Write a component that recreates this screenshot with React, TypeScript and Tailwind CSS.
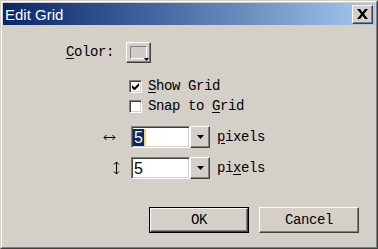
const mono = "font-['Liberation_Mono',monospace] text-[14px] tracking-[-0.4px] text-black";
const raised =
  "border border-t-white border-l-white border-r-[#404040] border-b-[#404040] shadow-[inset_-1px_-1px_0_#808080]";
const sunken =
  "border border-t-[#808080] border-l-[#808080] border-r-white border-b-white shadow-[inset_1px_1px_0_#404040,inset_-1px_-1px_0_#d4d0c8]";

function Check({ checked }: { checked?: boolean }) {
  return (
    <div className={`w-[13px] h-[13px] bg-white ${sunken} flex items-center justify-center`}>
      {checked && (
        <svg width="7" height="7" viewBox="0 0 7 7">
          <path d="M0 2v3l2 2h1l4-4V0L2.5 4.5z" fill="#000" />
        </svg>
      )}
    </div>
  );
}

function Combo({ selected }: { selected?: boolean }) {
  return (
    <div className="flex h-[22px]">
      <div className={`w-[59px] h-full bg-white ${sunken} flex items-center pl-[1px]`}>
        <span
          className={`font-['Liberation_Sans',sans-serif] text-[16px] leading-[17px] px-[1px] ${
            selected ? "bg-[#0a246a] text-white border-r-2 border-[#f5d66b]" : "text-black"
          }`}
        >
          5
        </span>
      </div>
      <div className={`w-[20px] h-full bg-[#d4d0c8] ${raised} flex items-center justify-center`}>
        <svg width="7" height="4" viewBox="0 0 7 4">
          <path d="M0 0h7L3.5 4z" fill="#000" />
        </svg>
      </div>
    </div>
  );
}

export default function App() {
  return (
    <div className="w-[378px] h-[249px] bg-[#d4d0c8] border border-t-[#d4d0c8] border-l-[#d4d0c8] border-r-[#404040] border-b-[#404040] overflow-hidden">
      <div className="h-full border border-t-white border-l-white border-r-[#808080] border-b-[#808080] p-[1px] flex flex-col">
        {/* title bar */}
        <div className="h-[22px] flex items-center justify-between pl-[2px] pr-[2px] bg-linear-to-r from-[#0a246a] to-[#a6caf0]">
          <span className="font-['Liberation_Sans',sans-serif] text-[15px] text-white leading-none">Edit Grid</span>
          <div className={`w-[21px] h-[19px] bg-[#d4d0c8] ${raised} flex items-center justify-center`}>
            <svg width="11" height="10" viewBox="0 0 11 10">
              <path d="M0 0h3l2.5 3.2L8 0h3L7 5l4 5H8L5.5 6.8 3 10H0l4-5z" fill="#000" />
            </svg>
          </div>
        </div>

        {/* color */}
        <div className="mt-[17px] h-[21px] flex items-center pl-[63px]">
          <span className={`${mono} w-[60px]`}>
            <span className="underline underline-offset-2">C</span>olor:
          </span>
          <div className={`relative w-[25px] h-[21px] ${raised} p-[3px]`}>
            <div className="w-[17px] h-[13px] bg-[#cfcdc8] border border-t-[#808080] border-l-[#808080] border-r-white border-b-white" />
            <svg className="absolute right-[1px] bottom-[1px]" width="5" height="3" viewBox="0 0 5 3">
              <path d="M0 0h5L2.5 3z" fill="#000" />
            </svg>
          </div>
        </div>

        {/* checkboxes */}
        <div className="mt-[17px] h-[13px] flex items-center gap-[6px] pl-[126px]">
          <Check checked />
          <span className={mono}>
            <span className="underline underline-offset-2">S</span>how Grid
          </span>
        </div>
        <div className="mt-[7px] h-[13px] flex items-center gap-[6px] pl-[126px]">
          <Check />
          <span className={mono}>
            Snap to <span className="underline underline-offset-2">G</span>rid
          </span>
        </div>

        {/* spacing rows */}
        <div className="mt-[13px] h-[22px] flex items-center pl-[97px]">
          <div className="w-[31px] flex items-center pl-[3px]">
            <svg width="13" height="7" viewBox="0 0 13 7">
              <path d="M1 3.5h11M3.5 1L1 3.5 3.5 6M9.5 1L12 3.5 9.5 6" stroke="#000" strokeWidth="1" fill="none" />
            </svg>
          </div>
          <Combo selected />
          <span className={`${mono} ml-[7px]`}>
            <span className="underline underline-offset-2">p</span>ixels
          </span>
        </div>
        <div className="mt-[9px] h-[22px] flex items-center pl-[97px]">
          <div className="w-[31px] flex items-center pl-[13px]">
            <svg width="7" height="14" viewBox="0 0 7 14">
              <path d="M3.5 1v12M1 3.5L3.5 1 6 3.5M1 10.5L3.5 13 6 10.5" stroke="#000" strokeWidth="1" fill="none" />
            </svg>
          </div>
          <Combo />
          <span className={`${mono} ml-[7px]`}>
            pi<span className="underline underline-offset-2">x</span>els
          </span>
        </div>

        {/* buttons */}
        <div className="mt-[28px] flex gap-[10px] pl-[146px]">
          <div className="w-[100px] h-[26px] border border-black">
            <div className={`h-full ${raised} flex items-center justify-center`}>
              <span className={mono}>OK</span>
            </div>
          </div>
          <div className={`w-[100px] h-[26px] ${raised} flex items-center justify-center`}>
            <span className={mono}>Cancel</span>
          </div>
        </div>
      </div>
    </div>
  );
}
